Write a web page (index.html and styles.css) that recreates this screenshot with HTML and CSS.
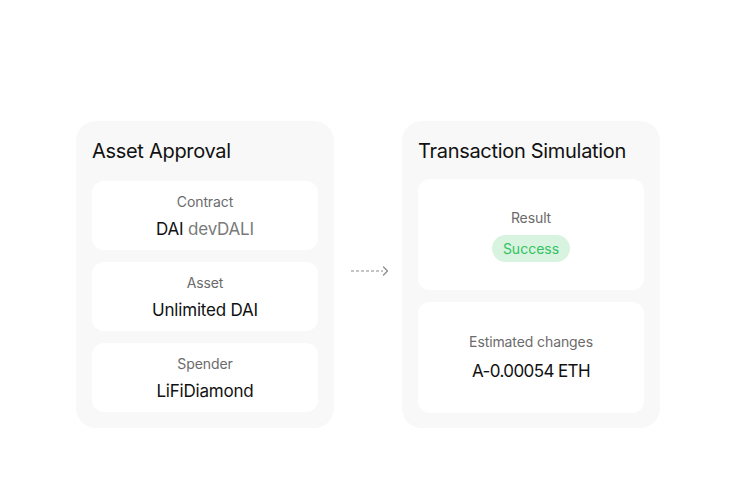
FILE: index.html
```html
<!DOCTYPE html>
<html>
<head>
<meta charset="utf-8">
<link rel="stylesheet" href="styles.css">
</head>
<body>
<main class="stage">
  <section class="card">
    <h2 class="card-title">Asset Approval</h2>
    <div class="item">
      <div class="label">Contract</div>
      <div class="value">DAI <span class="muted">devDALI</span></div>
    </div>
    <div class="item">
      <div class="label">Asset</div>
      <div class="value">Unlimited DAI</div>
    </div>
    <div class="item">
      <div class="label">Spender</div>
      <div class="value">LiFiDiamond</div>
    </div>
  </section>
  <div class="connector">
    <svg width="40" height="12" viewBox="0 0 40 12">
      <line x1="2" y1="6" x2="34" y2="6" stroke="#8a8a8a" stroke-width="1" stroke-dasharray="3 2"/>
      <path d="M34.5 2 L38.5 6 L34.5 10" fill="none" stroke="#8a8a8a" stroke-width="1.2" stroke-linecap="round" stroke-linejoin="round"/>
    </svg>
  </div>
  <section class="card card-sim">
    <h2 class="card-title">Transaction Simulation</h2>
    <div class="item item-grow">
      <div class="label">Result</div>
      <div class="pill">Success</div>
    </div>
    <div class="item item-grow">
      <div class="label">Estimated changes</div>
      <div class="value value-num">A-0.00054 ETH</div>
    </div>
  </section>
</main>
</body>
</html>
```
FILE: styles.css
```css
* { box-sizing: border-box; }
html, body { margin: 0; padding: 0; background: #fff; }
body {
  font-family: Inter, "Noto Sans", sans-serif;
  color: #111;
  width: 736px;
  height: 504px;
}
.stage {
  display: flex;
  justify-content: center;
  align-items: stretch;
  padding-top: 121px;
}
.card {
  width: 258px;
  height: 307px;
  background: #f8f8f8;
  border-radius: 20px;
  padding: 16px 16px 15px;
  display: flex;
  flex-direction: column;
  gap: 12px;
}
.card-title {
  margin: 0 0 4px;
  font-size: 20px;
  line-height: 28px;
  font-weight: 400;
  color: #111;
  letter-spacing: -0.3px;
}
.card-sim .card-title { margin-bottom: 2px; }
.item {
  background: #fff;
  border-radius: 12px;
  height: 69px;
  padding: 11px 8px 9px;
  display: flex;
  flex-direction: column;
  align-items: center;
  gap: 5px;
}
.item-grow {
  flex: 1;
  height: auto;
  justify-content: center;
  padding: 0 8px;
  gap: 7px;
}
.label {
  font-size: 14px;
  line-height: 20px;
  color: #6b6b6b;
  letter-spacing: -0.1px;
}
.value {
  font-size: 17px;
  line-height: 24px;
  color: #111;
  letter-spacing: -0.2px;
}
.value-num { letter-spacing: -0.6px; }
.muted { color: #7a7a7a; }
.pill {
  background: #d8f3df;
  color: #34c262;
  font-size: 14px;
  line-height: 27px;
  height: 27px;
  padding: 0 11px;
  border-radius: 14px;
}
.connector {
  width: 68px;
  display: flex;
  align-items: center;
  justify-content: center;
}
.connector svg { display: block; margin-top: -8px; margin-left: 2px; }
```
